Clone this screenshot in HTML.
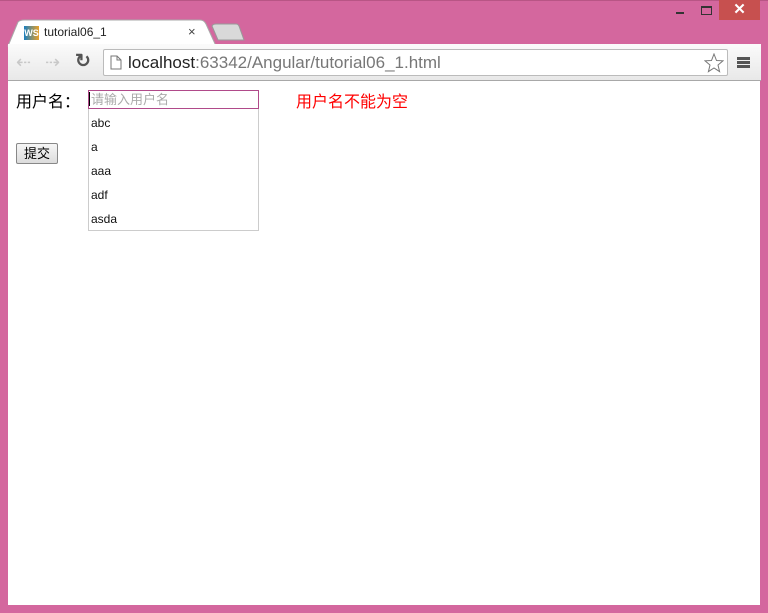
<!DOCTYPE html>
<html><head><meta charset="utf-8"><style>
*{margin:0;padding:0;box-sizing:border-box}
body{width:768px;height:613px;background:#d4679e;position:relative;overflow:hidden;font-family:"Liberation Sans","Noto Sans CJK SC",sans-serif}
.abs{position:absolute}
</style></head><body>
<div class="abs" style="left:0;top:0;width:768px;height:1px;background:#b85585"></div>
<div class="abs" style="left:676px;top:12px;width:8px;height:2px;background:#333"></div>
<div class="abs" style="left:701px;top:6px;width:11px;height:9px;border:1px solid #333;border-top-width:2px"></div>
<div class="abs" style="left:719px;top:0;width:41px;height:20px;background:#c7504f;color:#fff;font-size:15px;text-align:center;line-height:20px;font-weight:bold">✕</div>
<svg class="abs" style="left:0;top:18px" width="260" height="30"><path d="M8 28 L18 4 Q20 2 24 2 L200 2 Q204 2 206 6 L216 28 Z" fill="#fff" stroke="#a9a9a9"/><path d="M212 8 Q213 6 216 6 L236 6 Q238 6 239 8 L244 22 L218 22 Z" fill="#d9d9d9" stroke="#999"/></svg>
<div class="abs" style="left:24px;top:26px;width:15px;height:14px;background:linear-gradient(90deg,#1a7fbf,#e8a028);font-size:9px;font-weight:bold;color:#fff;line-height:14px;text-align:center">WS</div>
<div class="abs" style="left:44px;top:25px;font-size:12px;color:#222">tutorial06_1</div>
<div class="abs" style="left:188px;top:24px;font-size:13px;color:#444">×</div>
<div class="abs" style="left:8px;top:44px;width:753px;height:37px;background:linear-gradient(#fbfbfb,#e8e8e8);border-bottom:1px solid #a8a8a8"></div>
<div class="abs" style="left:16px;top:52px;font-size:18px;color:#c8c8c8">⇠</div>
<div class="abs" style="left:45px;top:52px;font-size:18px;color:#c8c8c8">⇢</div>
<div class="abs" style="left:75px;top:50px;font-size:19px;color:#555;font-weight:bold">↻</div>
<div class="abs" style="left:103px;top:49px;width:625px;height:27px;background:#fff;border:1px solid #bbb;border-radius:2px"></div>
<svg class="abs" style="left:110px;top:55px" width="12" height="15"><path d="M1 1 H7 L11 5 V14 H1 Z" fill="#fff" stroke="#777"/><path d="M7 1 V5 H11" fill="none" stroke="#777"/></svg>
<div class="abs" style="left:128px;top:53px;font-size:17px;color:#222">localhost<span style="color:#777">:63342/Angular/tutorial06_1.html</span></div>
<svg class="abs" style="left:704px;top:53px" width="20" height="20"><path d="M10 1 L12.5 7.5 L19 7.8 L14 12 L15.6 18.6 L10 15 L4.4 18.6 L6 12 L1 7.8 L7.5 7.5 Z" fill="#fff" stroke="#777"/></svg>
<div class="abs" style="left:737px;top:57px;width:13px;height:3px;background:#555;box-shadow:0 4px 0 #555,0 8px 0 #555"></div>
<div class="abs" style="left:8px;top:81px;width:752px;height:524px;background:#fff"></div>
<div class="abs" style="left:16px;top:88px;font-size:16px;color:#000">用户名：</div>
<div class="abs" style="left:88px;top:90px;width:171px;height:19px;border:1px solid #b04a8a;font-size:13px;color:#aaa;line-height:17px;padding-left:2px">请输入用户名</div>
<div class="abs" style="left:89px;top:92px;width:1px;height:14px;background:#000"></div>
<div class="abs" style="left:88px;top:109px;width:171px;height:122px;border:1px solid #ccc;border-top:none;font-size:12px;color:#111">
<div style="position:absolute;left:2px;top:7px">abc</div>
<div style="position:absolute;left:2px;top:31px">a</div>
<div style="position:absolute;left:2px;top:55px">aaa</div>
<div style="position:absolute;left:2px;top:79px">adf</div>
<div style="position:absolute;left:2px;top:103px">asda</div>
</div>
<div class="abs" style="left:296px;top:88px;font-size:16px;color:#f00">用户名不能为空</div>
<div class="abs" style="left:16px;top:143px;width:42px;height:21px;border:1px solid #888;background:linear-gradient(#f6f6f6,#dcdcdc);font-size:13px;text-align:center;line-height:19px;border-radius:2px">提交</div>
</body></html>
